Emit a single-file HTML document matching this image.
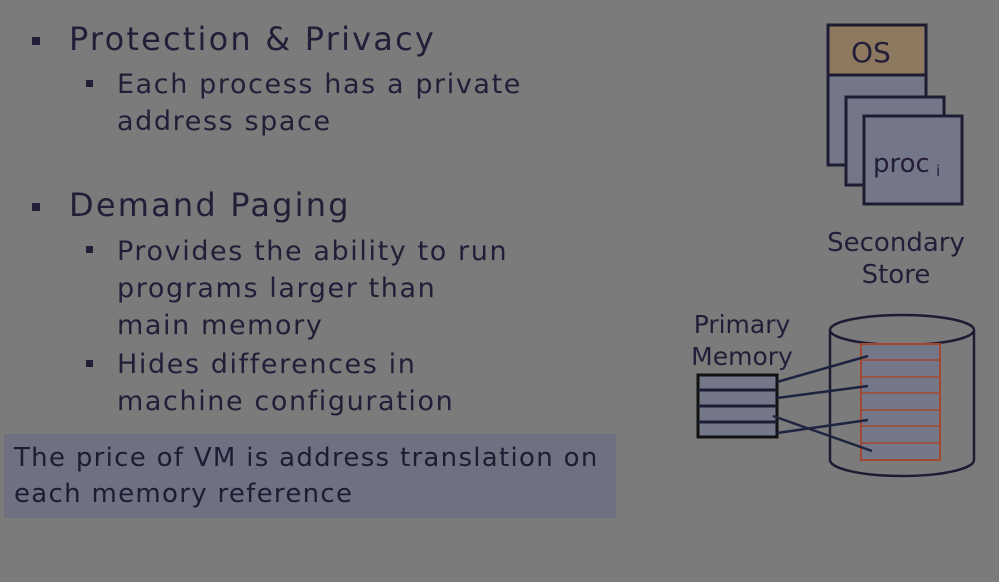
<!DOCTYPE html>
<html><head><style>
body{margin:0;width:999px;height:582px;background:#7b7b7b;position:relative;overflow:hidden;font-family:"DejaVu Sans","Liberation Sans",sans-serif;color:#231d38}
.t{position:absolute;white-space:nowrap}
.b1{font-size:32px;letter-spacing:2.2px}
.b2{font-size:27px;line-height:37px;letter-spacing:1.6px}
.sq{position:absolute;background:#231d38}
</style></head><body>
<div class="sq" style="left:32px;top:37px;width:8px;height:8px"></div>
<div class="t b1" style="left:69px;top:20px">Protection &amp; Privacy</div>
<div class="sq" style="left:86px;top:80px;width:7px;height:7px"></div>
<div class="t b2" style="left:117px;top:66px">Each process has a private<br>address space</div>
<div class="sq" style="left:32px;top:203px;width:8px;height:8px"></div>
<div class="t b1" style="left:69px;top:186px">Demand Paging</div>
<div class="sq" style="left:86px;top:246px;width:7px;height:7px"></div>
<div class="t b2" style="left:117px;top:233px">Provides the ability to run<br>programs larger than<br>main memory</div>
<div class="sq" style="left:86px;top:360px;width:7px;height:7px"></div>
<div class="t b2" style="left:117px;top:346px">Hides differences in<br>machine configuration</div>
<div style="position:absolute;left:4px;top:434px;width:612px;height:84px;background:#6f7080"></div>
<div class="t" style="left:14px;top:440px;font-size:26px;line-height:36px;letter-spacing:1.3px;font-family:'Comic Sans MS','DejaVu Sans',sans-serif;color:#1e1c33">The price of VM is address translation on<br>each memory reference</div>
<svg style="position:absolute;left:0;top:0" width="999" height="582">
<rect x="828" y="25" width="98" height="50" fill="#8d7860" stroke="#1e1c33" stroke-width="3"/>
<rect x="828" y="75" width="98" height="90" fill="#747788" stroke="#1e1c33" stroke-width="3"/>
<rect x="846" y="97" width="98" height="88" fill="#747788" stroke="#1e1c33" stroke-width="3"/>
<rect x="864" y="116" width="98" height="88" fill="#747788" stroke="#1e1c33" stroke-width="3"/>
<text x="851" y="62" font-size="28" fill="#231d38" font-family="DejaVu Sans">OS</text>
<text x="873" y="172" font-size="26" fill="#231d38" font-family="DejaVu Sans">proc</text>
<text x="936" y="176" font-size="15" fill="#231d38" font-family="DejaVu Sans">i</text>
<text x="896" y="251" font-size="26" text-anchor="middle" fill="#231d38" font-family="DejaVu Sans">Secondary</text>
<text x="896" y="283" font-size="26" text-anchor="middle" fill="#231d38" font-family="DejaVu Sans">Store</text>
<text x="742" y="333" font-size="25" text-anchor="middle" fill="#231d38" font-family="DejaVu Sans">Primary</text>
<text x="742" y="365" font-size="25" text-anchor="middle" fill="#231d38" font-family="DejaVu Sans">Memory</text>
<path d="M830 330 V460 A72 16 0 0 0 974 460 V330" fill="#7b7b7b" stroke="#1e1c33" stroke-width="2.5"/>
<ellipse cx="902" cy="330" rx="72" ry="15" fill="#7b7b7b" stroke="#1e1c33" stroke-width="2.5"/>
<rect x="861" y="344" width="79" height="116" fill="#747788" stroke="#a04830" stroke-width="2"/>
<g stroke="#a04830" stroke-width="1.5"><line x1="861" y1="360" x2="940" y2="360"/><line x1="861" y1="377" x2="940" y2="377"/><line x1="861" y1="393" x2="940" y2="393"/><line x1="861" y1="410" x2="940" y2="410"/><line x1="861" y1="426" x2="940" y2="426"/><line x1="861" y1="443" x2="940" y2="443"/></g>
<rect x="698" y="375" width="79" height="62" fill="#747788" stroke="#111" stroke-width="3"/>
<g stroke="#1e1c33" stroke-width="3"><line x1="698" y1="390" x2="777" y2="390"/><line x1="698" y1="406" x2="777" y2="406"/><line x1="698" y1="422" x2="777" y2="422"/></g>
<g stroke="#1e2440" stroke-width="2.5"><line x1="777" y1="382" x2="868" y2="356"/><line x1="777" y1="398" x2="868" y2="386"/><line x1="777" y1="433" x2="868" y2="420"/><line x1="773" y1="416" x2="872" y2="451"/></g>
</svg>
</body></html>
